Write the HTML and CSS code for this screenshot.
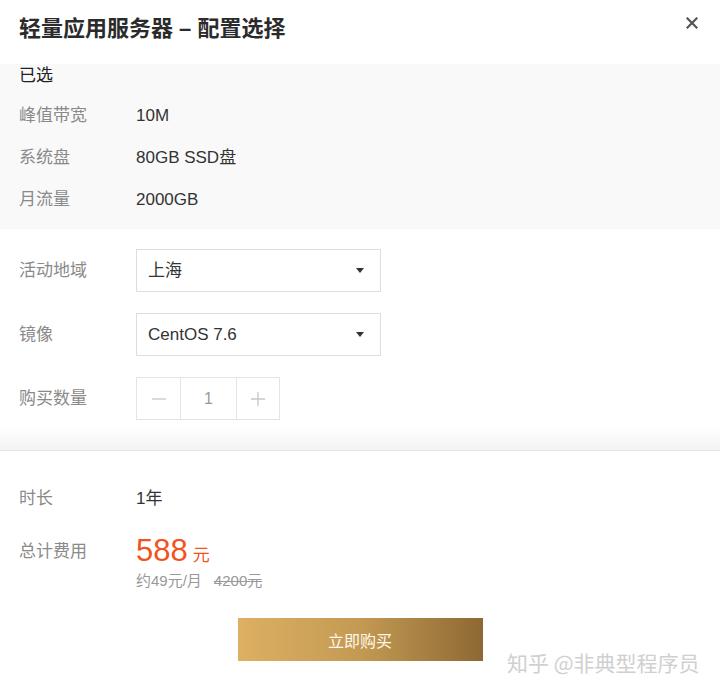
FILE: index.html
```html
<!DOCTYPE html>
<html lang="zh">
<head>
<meta charset="utf-8">
<link rel="stylesheet" href="styles.css">
</head>
<body>
<div class="dialog">
  <header class="head">
    <h1 class="title">轻量应用服务器 – 配置选择</h1>
    <span class="close">
      <svg width="12" height="12" viewBox="0 0 12 12"><path d="M1.5 1.5L10.5 10.5M10.5 1.5L1.5 10.5" stroke="#555" stroke-width="2.2" stroke-linecap="square"/></svg>
    </span>
  </header>

  <section class="picked">
    <div class="picked-title">已选</div>
    <div class="picked-list">
      <div class="row"><span class="label">峰值带宽</span><span class="value">10M</span></div>
      <div class="row"><span class="label">系统盘</span><span class="value">80GB SSD盘</span></div>
      <div class="row"><span class="label">月流量</span><span class="value">2000GB</span></div>
    </div>
  </section>

  <section class="form">
    <div class="frow">
      <span class="label">活动地域</span>
      <div class="select"><span>上海</span><i class="caret"></i></div>
    </div>
    <div class="frow">
      <span class="label">镜像</span>
      <div class="select"><span>CentOS 7.6</span><i class="caret"></i></div>
    </div>
    <div class="frow">
      <span class="label">购买数量</span>
      <div class="stepper">
        <span class="step minus">
          <svg width="14" height="14" viewBox="0 0 14 14"><path d="M0 7H14" stroke="#c8c8c8" stroke-width="1.3"/></svg>
        </span>
        <span class="step num">1</span>
        <span class="step plus">
          <svg width="14" height="14" viewBox="0 0 14 14"><path d="M0 7H14M7 0V14" stroke="#c8c8c8" stroke-width="1.3"/></svg>
        </span>
      </div>
    </div>
  </section>
  <div class="divider"></div>

  <section class="summary">
    <div class="srow">
      <span class="label">时长</span>
      <span class="value">1年</span>
    </div>
    <div class="srow total">
      <span class="label">总计费用</span>
      <div class="price">
        <div class="price-main"><span class="amount">588</span><span class="unit">元</span></div>
        <div class="price-sub">约49元/月<s class="orig">4200元</s></div>
      </div>
    </div>
    <div class="actions">
      <button class="buy">立即购买</button>
    </div>
  </section>
</div>
<div class="watermark">知乎 @非典型程序员</div>
</body>
</html>
```

FILE: styles.css
```css
* { box-sizing: border-box; }
html, body { margin: 0; padding: 0; background: #fff; }
body {
  width: 720px;
  height: 693px;
  overflow: hidden;
  position: relative;
  font-family: "Liberation Sans", "Noto Sans CJK SC", sans-serif;
  color: #333;
}
.head {
  height: 64px;
  display: flex;
  justify-content: space-between;
  align-items: flex-start;
  padding: 0 22px 0 19px;
}
.title {
  margin: 0;
  margin-top: 16px;
  font-size: 22px;
  line-height: 26px;
  font-weight: 700;
  color: #2b2b2b;
}
.close {
  margin-top: 17px;
  width: 12px;
  height: 12px;
  display: flex;
}
.picked {
  background: #f9f9f9;
  height: 165px;
  padding: 0 19px;
}
.picked-title {
  font-size: 17px;
  line-height: 24px;
  color: #222;
}
.picked-list { padding-top: 7px; }
.row {
  display: flex;
  align-items: center;
  height: 42px;
  font-size: 17px;
  line-height: 24px;
}
.label {
  width: 117px;
  flex: none;
  color: #8a8a8a;
  font-size: 17px;
  line-height: 24px;
}
.value { color: #333; font-size: 17px; line-height: 24px; }

.form {
  padding: 20px 19px 6px;
  display: flex;
  flex-direction: column;
  gap: 21px;
}
.frow {
  display: flex;
  align-items: center;
  height: 43px;
}
.select {
  width: 245px;
  height: 43px;
  border: 1px solid #dedede;
  display: flex;
  align-items: center;
  justify-content: space-between;
  padding: 0 16px 0 11px;
  font-size: 17px;
  line-height: 24px;
  color: #333;
}
.caret {
  width: 0;
  height: 0;
  border-left: 4.5px solid transparent;
  border-right: 4.5px solid transparent;
  border-top: 5px solid #333;
}
.stepper {
  display: flex;
  height: 43px;
  border: 1px solid #e3e3e3;
}
.step {
  display: flex;
  align-items: center;
  justify-content: center;
  height: 100%;
}
.minus { width: 43px; }
.num {
  width: 57px;
  border-left: 1px solid #e3e3e3;
  border-right: 1px solid #e3e3e3;
  color: #999;
  font-size: 16px;
}
.plus { width: 42px; }
.divider {
  height: 25px;
  background: linear-gradient(#ffffff, #f3f3f3);
  border-bottom: 1px solid #e6e6e6;
}
.summary {
  padding: 36px 19px 0;
}
.srow {
  display: flex;
  align-items: center;
  line-height: 24px;
}
.total {
  margin-top: 22px;
  align-items: flex-start;
}
.total .label { line-height: 36px; margin-top: 1px; }
.price-main {
  height: 36px;
  display: flex;
  align-items: baseline;
  color: #f2531c;
}
.amount {
  font-size: 31px;
  line-height: 36px;
}
.unit {
  font-size: 17px;
  margin-left: 5px;
}
.price-sub {
  margin-top: 2px;
  font-size: 15px;
  line-height: 20px;
  color: #999;
}
.orig {
  margin-left: 12px;
  color: #999;
}
.actions {
  display: flex;
  justify-content: center;
  margin-top: 27px;
}
.buy {
  width: 245px;
  height: 43px;
  border: none;
  background: linear-gradient(90deg, #ddb063 0%, #c39a53 50%, #8d6833 100%);
  color: #fff7e8;
  font-family: "Liberation Sans", "Noto Sans CJK SC", sans-serif;
  font-size: 16px;
}
.watermark {
  position: absolute;
  left: 507px;
  top: 649px;
  font-size: 21px;
  line-height: 26px;
  color: #d0d0d0;
  text-shadow: 0 0 1px #fff;
  font-family: "Noto Sans CJK SC", sans-serif;
}
```
